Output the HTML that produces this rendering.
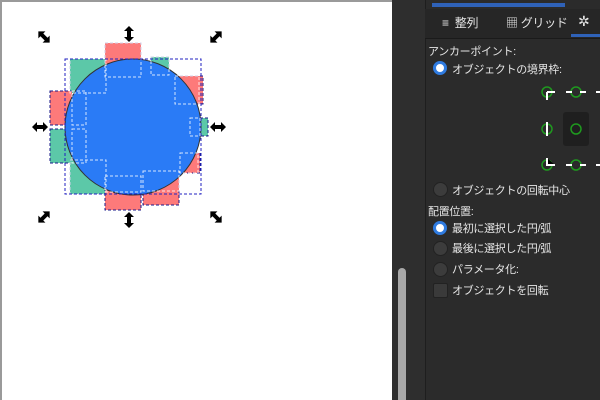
<!DOCTYPE html>
<html><head><meta charset="utf-8"><style>
body{margin:0;width:600px;height:400px;overflow:hidden;background:#2b2b2b;font-family:"Liberation Sans","Noto Sans CJK JP",sans-serif;position:relative}
.abs{position:absolute}
.t{color:#e6e6e6;font-size:11px;position:absolute;white-space:nowrap;letter-spacing:-0.3px}
.rb{position:absolute;width:13px;height:13px;border-radius:50%;background:#3c3c3c;border:1px solid #222}
.rb.on{background:#fff;border:3px solid #2f7be0;width:8px;height:8px}
</style></head><body>
<div class="abs" style="left:0;top:0;width:392px;height:400px;background:#fff;border-top:2px solid #9a9a9a;border-left:2px solid #9a9a9a;box-sizing:border-box"></div>
<svg class="abs" style="left:0;top:0" width="392" height="400">
<g stroke="#1a1a8a" stroke-width="1" stroke-dasharray="3,2">
<rect x="70" y="59" width="36" height="34" fill="#5cc8a8"/>
<rect x="50" y="91" width="22" height="34" fill="#fd7a7a"/>
<rect x="50" y="129" width="22" height="34" fill="#5cc8a8"/>
<rect x="70" y="160" width="36" height="34" fill="#5cc8a8"/>
<rect x="105" y="43" width="36" height="34" fill="#fd7a7a"/>
<rect x="105" y="176" width="36" height="34" fill="#fd7a7a"/>
<rect x="143" y="171" width="36" height="34" fill="#fd7a7a"/>
<rect x="151" y="57" width="18" height="18" fill="#5cc8a8"/>
<rect x="175" y="76" width="28" height="28" fill="#fd7a7a"/>
<rect x="180" y="153" width="20" height="20" fill="#fd7a7a"/>
<rect x="190" y="118" width="18" height="18" fill="#5cc8a8"/>
</g>
<circle cx="133" cy="127" r="68" fill="#2a7bf6" stroke="#333" stroke-width="1"/>
<g fill="none" stroke="#fff" stroke-width="1" stroke-dasharray="3,2" opacity=".8">
<rect x="105" y="43" width="36" height="34"/><rect x="70" y="59" width="36" height="34"/>
<rect x="72" y="91" width="14" height="34"/><rect x="72" y="129" width="14" height="34"/>
<rect x="70" y="160" width="36" height="34"/><rect x="105" y="176" width="36" height="16"/>
<rect x="143" y="171" width="36" height="20"/><rect x="151" y="57" width="18" height="18"/>
<rect x="175" y="76" width="24" height="28"/><rect x="180" y="153" width="18" height="20"/>
<rect x="190" y="118" width="10" height="18"/>
</g>
<rect x="65" y="59" width="136" height="135" fill="none" stroke="#2020c0" stroke-dasharray="3,2"/>
<defs><polygon id="ar" points="-8,0 -3,-5 -3,-2 3,-2 3,-5 8,0 3,5 3,2 -3,2 -3,5" fill="#000"/></defs>
<use href="#ar" transform="translate(44,37) rotate(45)"/>
<use href="#ar" transform="translate(216,37) rotate(-45)"/>
<use href="#ar" transform="translate(44,217) rotate(-45)"/>
<use href="#ar" transform="translate(216,217) rotate(45)"/>
<use href="#ar" transform="translate(129,34) rotate(90)"/>
<use href="#ar" transform="translate(129,220) rotate(90)"/>
<use href="#ar" transform="translate(40,127)"/>
<use href="#ar" transform="translate(218,127)"/>
</svg>
<div class="abs" style="left:392px;top:0;width:33px;height:400px;background:#2e2e2e;border-right:1px solid #1e1e1e"></div>
<div class="abs" style="left:398px;top:268px;width:8px;height:132px;background:#a8a8a8;border-radius:4px 4px 0 0"></div>
<div class="abs" style="left:432px;top:3px;width:133px;height:4px;background:#2f62b8"></div>
<div class="abs" style="left:425px;top:9px;width:175px;height:29px;background:#262626;border-bottom:1px solid #1a1a1a"></div>
<div class="t" style="left:442px;top:14px;font-size:12px">≡&nbsp; 整列</div>
<div class="t" style="left:506px;top:14px;font-size:12px">▦ グリッド</div>
<div class="t" style="left:578px;top:13px;font-size:14px">✲</div>
<div class="abs" style="left:571px;top:34px;width:29px;height:3px;background:#2f62b8"></div>
<div class="t" style="left:428px;top:43px">アンカーポイント:</div>
<div class="rb on" style="left:433px;top:61px"></div><div class="t" style="left:452px;top:61px">オブジェクトの境界枠:</div>
<div class="abs" style="left:563px;top:112px;width:26px;height:34px;background:#1f1f1f;border-radius:3px"></div>
<svg class="abs" style="left:530px;top:80px" width="70" height="100">
<g fill="none" stroke="#1f9a1f" stroke-width="1.5"><circle cx="17" cy="12" r="5"/><circle cx="46" cy="12" r="5"/><circle cx="17" cy="49" r="5"/><circle cx="46" cy="49" r="5"/><circle cx="17" cy="85" r="5"/><circle cx="46" cy="85" r="5"/></g>
<g stroke="#fff" stroke-width="2"><path d="M17 12h8M17 12v8M36 12h6M50 12h6M66 12h4M17 42v14M17 78v7h8M36 85h6M50 85h6M66 85h4"/></g>
</svg>
<div class="rb" style="left:433px;top:182px"></div><div class="t" style="left:452px;top:182px">オブジェクトの回転中心</div>
<div class="t" style="left:428px;top:203px">配置位置:</div>
<div class="rb on" style="left:433px;top:221px"></div><div class="t" style="left:452px;top:220px">最初に選択した円/弧</div>
<div class="rb" style="left:433px;top:241px"></div><div class="t" style="left:452px;top:240px">最後に選択した円/弧</div>
<div class="rb" style="left:433px;top:262px"></div><div class="t" style="left:452px;top:261px">パラメータ化:</div>
<div class="abs" style="left:433px;top:283px;width:13px;height:13px;background:#3a3a3a;border:1px solid #222;border-radius:2px"></div><div class="t" style="left:452px;top:282px">オブジェクトを回転</div>
</body></html>
